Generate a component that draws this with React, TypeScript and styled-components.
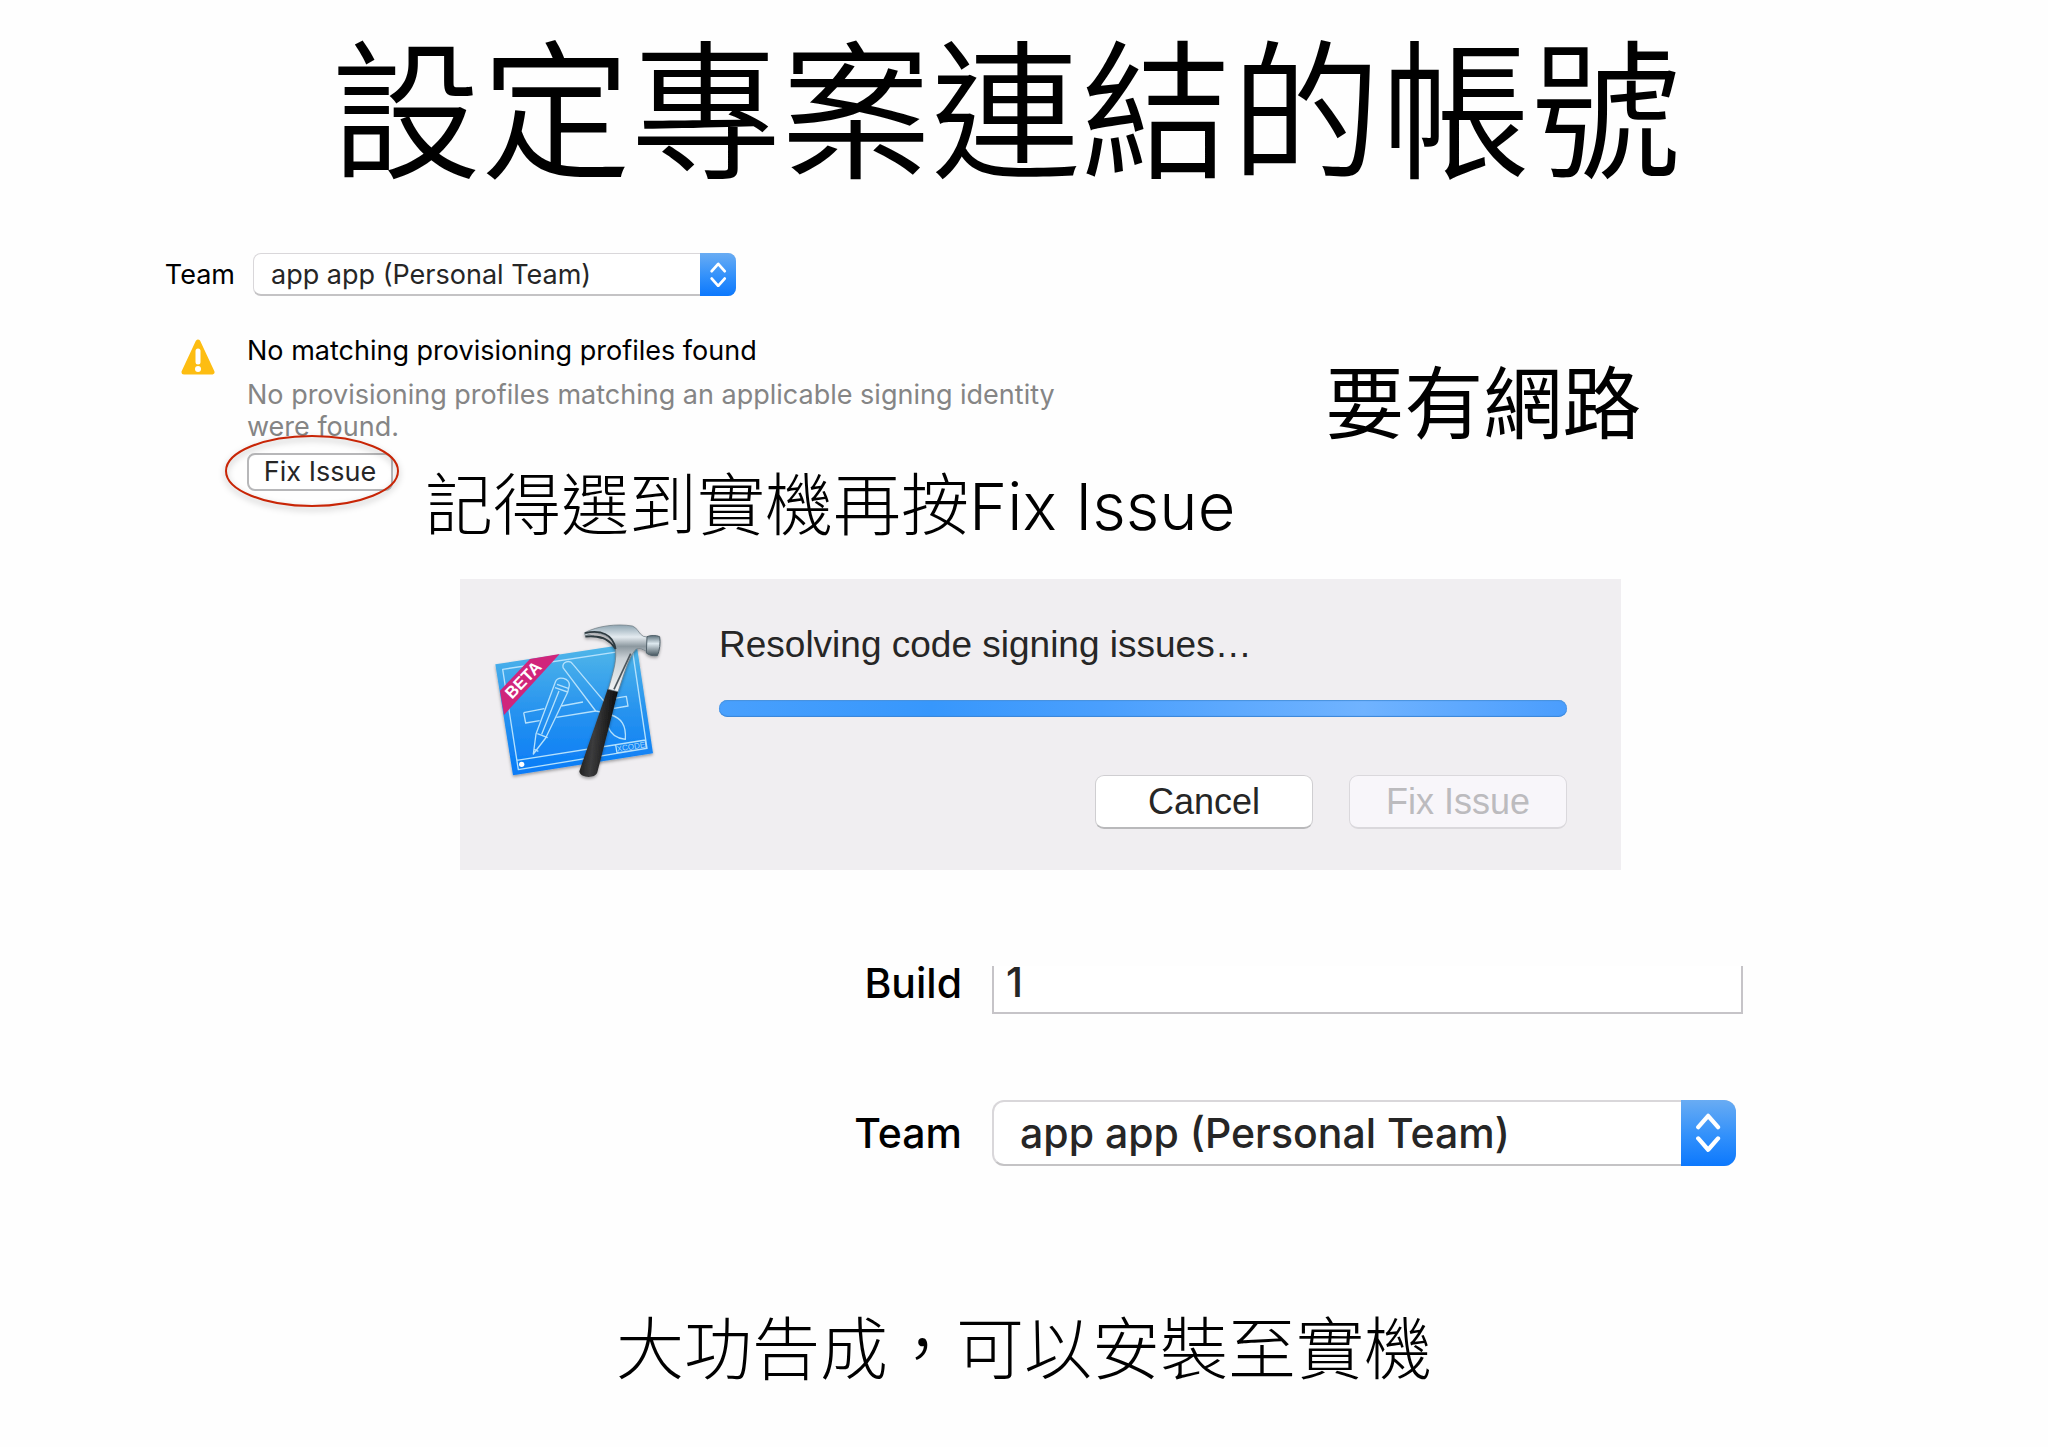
import React from 'react';
import styled, { createGlobalStyle } from 'styled-components';

const cjk = '"Noto Sans CJK TC", "Noto Sans", sans-serif';
const cjkDemiLight = 'Inter, "Noto Sans CJK TC DemiLight", "Noto Sans CJK TC", sans-serif';
const system = 'Inter, "Noto Sans CJK TC", sans-serif';
const helvetica = '"Liberation Sans", Arial, sans-serif';

const GlobalStyle = createGlobalStyle`
  *, *::before, *::after { box-sizing: border-box; }
  body { margin: 0; background: #fefefe; color: #000; font-family: ${system}; }
  h1, h2, p { margin: 0; font-weight: 400; }
  button, input, select { font: inherit; color: inherit; margin: 0; }
`;

const Slide = styled.main`
  display: flex;
  flex-direction: column;
  padding-bottom: 48px;
`;

const Title = styled.h1`
  padding: 0 36px 0 0;
  font: 300 150px/226px ${cjkDemiLight};
  text-align: center;
  white-space: nowrap;
`;

const Signing = styled.section`
  display: flex;
  align-items: flex-start;
  padding: 27px 0 0 163px;
`;

const SigningDetails = styled.div`
  flex: none;
`;

const Field = styled.div`
  display: flex;
  align-items: center;
`;

const Label = styled.label<{ $large?: boolean }>`
  width: ${p => (p.$large ? 140 : 90)}px;
  padding-right: ${p => (p.$large ? 30 : 18)}px;
  font-size: ${p => (p.$large ? 41 : 27)}px;
  text-align: right;
`;

const PopupBox = styled.div<{ $large?: boolean }>`
  position: relative;
  width: ${p => (p.$large ? 744 : 483)}px;
  height: ${p => (p.$large ? 66 : 43)}px;
`;

const Popup = styled.select<{ $large?: boolean }>`
  width: 100%;
  height: 100%;
  padding: 0 0 0 ${p => (p.$large ? 26 : 17)}px;
  appearance: none;
  background: #fff;
  border: ${p => (p.$large ? 2 : 1)}px solid #d9d7da;
  border-bottom: 2px solid #c4c3c5;
  border-radius: ${p => (p.$large ? 12 : 8)}px;
  color: #262626;
  font-size: ${p => (p.$large ? 41 : 27)}px;
`;

const Stepper = styled.span<{ $large?: boolean }>`
  position: absolute;
  inset: 0 0 0 auto;
  display: flex;
  align-items: center;
  justify-content: center;
  width: ${p => (p.$large ? 55 : 36)}px;
  border-radius: ${p => (p.$large ? '0 12px 12px 0' : '0 8px 8px 0')};
  background: linear-gradient(#69acf3, #3190fb 55%, #0c78fd);
  pointer-events: none;

  svg { height: 60%; }
`;

const Issue = styled.div`
  display: flex;
  align-items: flex-start;
  gap: 32px;
  padding: 39px 0 0 18px;
`;

const WarningIcon = styled.svg`
  flex: none;
  width: 34px;
  height: 36px;
  margin-top: 4px;
`;

const IssueTitle = styled.h2`
  font-size: 27px;
  line-height: 32px;
`;

const IssueText = styled.p`
  max-width: 840px;
  margin-top: 12px;
  color: #858585;
  font-size: 27px;
  line-height: 32px;
`;

const Actions = styled.div`
  display: flex;
  align-items: flex-start;
  gap: 32px;
`;

const Circled = styled.div`
  position: relative;
  padding-top: 10px;
`;

const Ring = styled.svg`
  position: absolute;
  left: -23px;
  top: -10px;
  width: 176px;
  height: 76px;
  overflow: visible;
  pointer-events: none;
  filter: drop-shadow(0 3px 3px rgba(0, 0, 0, 0.3));
`;

const SmallButton = styled.button`
  width: 146px;
  height: 38px;
  padding: 0;
  background: #fff;
  border: 2px solid #b7b7b9;
  border-radius: 8px;
  color: #262626;
  font-size: 27px;
  line-height: 32px;
`;

const Hint = styled.p`
  padding-top: 8px;
  font: 300 68px/100px ${cjk};
  white-space: nowrap;
`;

const HintAction = styled.span`
  font-family: ${system};
  font-size: 65px;
  line-height: 1;
`;

const NetworkNote = styled.p`
  padding: 86px 0 0 90px;
  font: 400 79px/120px ${cjk};
  white-space: nowrap;
`;

const Dialog = styled.section`
  display: flex;
  align-items: flex-start;
  width: 1161px;
  margin: 28px 0 0 460px;
  padding: 42px 54px 41px 33px;
  background: #f0eef1;
  font-family: ${helvetica};
`;

const AppIcon = styled.svg`
  flex: none;
  width: 170px;
  height: 160px;
  margin-right: 56px;
`;

const DialogBody = styled.div`
  flex: 1;
`;

const Status = styled.p`
  color: #262626;
  font-size: 37px;
  line-height: 48px;
`;

const Progress = styled.div`
  height: 17px;
  margin-top: 31px;
  border-radius: 9px;
  background: linear-gradient(90deg, #49a0fd, #3797fc 25%, #4a9ffd 45%, #70b3ff 76%, #4a9dfd);
  box-shadow: inset 0 -1px 1px #3b86d8, inset 0 1px 1px #4a92dc;
`;

const DialogButtons = styled.div`
  display: flex;
  justify-content: flex-end;
  gap: 36px;
  margin-top: 58px;
`;

const DialogButton = styled.button`
  width: 218px;
  height: 54px;
  padding: 0;
  background: #fff;
  border: 1px solid #cfced1;
  border-bottom: 2px solid #b9b9bb;
  border-radius: 9px;
  color: #262626;
  font-size: 36px;

  &:disabled {
    background: #f8f6fa;
    border-color: #dad8dc;
    color: #bcbbbe;
  }
`;

const Result = styled.section`
  display: flex;
  flex-direction: column;
  gap: 86px;
  padding: 96px 0 0 852px;
  font-weight: 500;
`;

const BuildInput = styled.input`
  width: 751px;
  height: 48px;
  padding: 0 12px 14px;
  background: #fff;
  border: 2px solid #c6c4c8;
  border-top: 0;
  color: #262626;
  font-size: 41px;
  line-height: 32px;
`;

const BuildField = styled(Field)`
  align-items: flex-start;

  label { line-height: 34px; }
`;

const Closing = styled.p`
  padding-top: 129px;
  font: 300 68px/100px ${cjk};
  text-align: center;
`;

const Arrows = () => (
  <svg viewBox="0 0 20 28" fill="none" stroke="#fff" strokeWidth="3" strokeLinecap="round" strokeLinejoin="round" aria-hidden="true">
    <path d="M3 10 10 2l7 8M3 18l7 8 7-8" />
  </svg>
);

function TeamField({ id, large }: { id: string; large?: boolean }) {
  return (
    <Field>
      <Label htmlFor={id} $large={large}>Team</Label>
      <PopupBox $large={large}>
        <Popup id={id} $large={large}>
          <option>app app (Personal Team)</option>
        </Popup>
        <Stepper $large={large}><Arrows /></Stepper>
      </PopupBox>
    </Field>
  );
}

const XcodeIcon = () => (
  <AppIcon viewBox="100 90 510 480" role="img" aria-label="Xcode Beta">
    <defs>
      <linearGradient id="sheet" x1="0" y1="0" x2="0" y2="1">
        <stop offset="0" stopColor="#52b8e8" />
        <stop offset="0.5" stopColor="#2894ef" />
        <stop offset="1" stopColor="#087bf7" />
      </linearGradient>
      <linearGradient id="steel" x1="0" y1="0" x2="0" y2="1">
        <stop offset="0" stopColor="#8fa5b2" />
        <stop offset="0.18" stopColor="#e4ebf0" />
        <stop offset="0.32" stopColor="#8c989f" />
        <stop offset="0.5" stopColor="#c9d0d5" />
        <stop offset="1" stopColor="#f2f4f5" />
      </linearGradient>
      <linearGradient id="poll" x1="0" y1="0" x2="0" y2="1">
        <stop offset="0" stopColor="#5d717c" />
        <stop offset="0.4" stopColor="#dde9ef" />
        <stop offset="1" stopColor="#45555e" />
      </linearGradient>
      <linearGradient id="grip" x1="0" y1="0" x2="1" y2="0.2">
        <stop offset="0" stopColor="#111" />
        <stop offset="0.45" stopColor="#3c3c3d" />
        <stop offset="1" stopColor="#0b0b0b" />
      </linearGradient>
      <filter id="drop" x="-10%" y="-10%" width="120%" height="125%">
        <feDropShadow dx="0" dy="5" stdDeviation="5" floodOpacity="0.35" />
      </filter>
    </defs>
    <path d="M107 220 530 155 580 487 160 553Z" fill="url(#sheet)" filter="url(#drop)" />
    <g fill="none" stroke="#b5e1fc" strokeWidth="4" strokeLinejoin="round">
      <path d="M129 235 518 176 562 472 176 536ZM171 508 558 447M468 462l4 24 88-14-3-22" />
      <path d="M192 365 254 353M192 365l6 31 42-7M305 345 370 333M290 379 408 360M464 322l36-6 5 29-42 7" />
      <path d="M310 230c-3-18 20-25 30-10l94 112M310 230l98 130 24 5M455 372c30 10 45 30 42 73-26-3-43-14-52-38" />
      <path d="M288 271c8-17 41-10 41 12l-5 21-66 137-37 48 8-60ZM286 290l38 13M292 280l34 12M233 428l31 12M298 300l-52 130M224 475l12 6" />
    </g>
    <circle cx="186" cy="520" r="8" fill="#fff" />
    <text x="473" y="482" transform="rotate(-9 473 482)" fill="#a9dafc" fontFamily="Liberation Sans, sans-serif" fontSize="24">XCODE</text>
    <path d="M211 204 300 189 133 372 121 299Z" fill="#d0257b" />
    <text x="157" y="326" transform="rotate(-46 157 326)" fill="#fff" fontFamily="Liberation Sans, sans-serif" fontWeight="700" fontSize="50">BETA</text>
    <g filter="url(#drop)">
      <path d="M444 294 475 301 413 544c-5 20-52 18-54-3Z" fill="url(#grip)" />
      <path d="M375 125c38-20 95-28 143-20 16 5 19 24 33 31l18 3-5 44c-18-10-30-15-39-4-21 28-32 72-50 123l-29-7c13-47 24-78 22-113-1-37-35-64-93-56l28 10-27-3Z" fill="url(#steel)" stroke="#66747c" strokeWidth="2" />
      <path d="M376 126c48-10 85 4 92 48-14-22-38-39-69-38M377 137c20-2 36-1 50 5" fill="none" stroke="#2f3a40" strokeWidth="5" />
      <path d="M562 137c8-4 28-5 38 0 3 18 0 42-7 57-14 1-25-1-33-8Z" fill="url(#poll)" stroke="#51616a" strokeWidth="3" />
      <path d="M513 188 463 295" stroke="#4b555b" strokeWidth="5" />
    </g>
  </AppIcon>
);

export default function App() {
  return (
    <>
      <GlobalStyle />
      <Slide>
        <Title>設定專案連結的帳號</Title>
        <Signing>
          <SigningDetails>
            <TeamField id="team" />
            <Issue>
              <WarningIcon viewBox="0 0 34 36" role="img" aria-label="Warning">
                <path d="M17 3 31 33H3Z" fill="#fdbd12" stroke="#fdbd12" strokeWidth="5" strokeLinejoin="round" />
                <path d="M17 12v11" stroke="#fff" strokeWidth="5" strokeLinecap="round" />
                <circle cx="17" cy="30" r="3" fill="#fff" />
              </WarningIcon>
              <div>
                <IssueTitle>No matching provisioning profiles found</IssueTitle>
                <IssueText>No provisioning profiles matching an applicable signing identity were found.</IssueText>
                <Actions>
                  <Circled>
                    <SmallButton type="button">Fix Issue</SmallButton>
                    <Ring viewBox="0 0 176 76" aria-hidden="true">
                      <ellipse cx="88" cy="38" rx="86" ry="35" fill="none" stroke="#c82506" strokeWidth="2" />
                    </Ring>
                  </Circled>
                  <Hint>記得選到實機再按<HintAction>Fix Issue</HintAction></Hint>
                </Actions>
              </div>
            </Issue>
          </SigningDetails>
          <NetworkNote>要有網路</NetworkNote>
        </Signing>
        <Dialog aria-label="Code signing">
          <XcodeIcon />
          <DialogBody>
            <Status>Resolving code signing issues…</Status>
            <Progress role="progressbar" aria-label="Resolving code signing issues" />
            <DialogButtons>
              <DialogButton type="button">Cancel</DialogButton>
              <DialogButton type="button" disabled>Fix Issue</DialogButton>
            </DialogButtons>
          </DialogBody>
        </Dialog>
        <Result>
          <BuildField>
            <Label htmlFor="build" $large>Build</Label>
            <BuildInput id="build" defaultValue="1" />
          </BuildField>
          <TeamField id="result-team" large />
        </Result>
        <Closing>大功告成，可以安裝至實機</Closing>
      </Slide>
    </>
  );
}
